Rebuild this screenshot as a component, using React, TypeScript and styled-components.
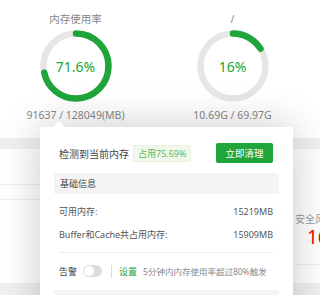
import React from "react";
import styled, { createGlobalStyle } from "styled-components";

const GlobalStyle = createGlobalStyle`
  html, body {
    margin: 0;
    padding: 0;
    background: #f0f0f0;
  }
  body {
    font-family: "Noto Sans", "Noto Sans CJK SC", sans-serif;
  }
`;

const Page = styled.div`
  position: relative;
  width: 320px;
  height: 295px;
  overflow: hidden;
  background: #f0f0f0;
`;

const TopCard = styled.div`
  height: 138px;
  background: #fff;
  display: grid;
  grid-template-columns: 151px 151px 151px;
  column-gap: 6px;
`;

const GaugeItem = styled.div`
  display: flex;
  flex-direction: column;
  align-items: center;
  padding-top: 12px;
`;

const GaugeTitle = styled.div`
  font-size: 10.5px;
  line-height: 14px;
  color: #888;
  height: 14px;
`;

const Ring = styled.div`
  position: relative;
  width: 72px;
  height: 72px;
  margin-top: 4px;
`;

const RingValue = styled.div`
  position: absolute;
  inset: 0;
  display: flex;
  align-items: center;
  justify-content: center;
  font-size: 14px;
  color: #20a53a;
`;

const GaugeFoot = styled.div`
  margin-top: 6px;
  font-size: 10.5px;
  line-height: 14px;
  color: #888;
  white-space: nowrap;
`;

const LowerRow = styled.div`
  margin-top: 11px;
  display: grid;
  grid-template-columns: 284px 1fr;
  column-gap: 4px;
`;

const LeftCard = styled.div`
  height: 134px;
  background: #fff;
`;

const CardHead = styled.div`
  height: 35px;
  border-bottom: 1px solid #eee;
`;

const CardLine = styled.div`
  height: 14px;
  border-bottom: 1px solid #eee;
`;

const RightCard = styled.div`
  height: 134px;
  background: #fff;
  padding: 63px 0 0 7px;
  box-sizing: border-box;
  white-space: nowrap;
`;

const RiskLabel = styled.div`
  font-size: 10px;
  line-height: 14px;
  color: #999;
`;

const RiskNum = styled.div`
  margin: 0 0 0 12px;
  font-size: 19px;
  line-height: 22px;
  color: #f00;
`;

const RiskLine = styled.div`
  margin-top: 16px;
  border-top: 1px solid #eee;
`;

const Popover = styled.div`
  position: absolute;
  left: 40px;
  top: 127px;
  width: 253px;
  height: 200px;
  box-sizing: border-box;
  padding: 16px 14px 0 14px;
  background: #fff;
  border-radius: 2px;
  box-shadow: 0 0 40px rgba(0, 0, 0, 0.22);
  &::before {
    content: "";
    position: absolute;
    left: 13px;
    top: -6px;
    border-left: 6px solid transparent;
    border-right: 6px solid transparent;
    border-bottom: 6px solid #fff;
  }
`;

const Header = styled.div`
  display: flex;
  align-items: center;
  height: 20px;
  padding: 0 6px 0 5px;
`;

const HeadTitle = styled.span`
  font-size: 10px;
  color: #444;
`;

const Tag = styled.span`
  margin-left: 4px;
  height: 17px;
  line-height: 15px;
  box-sizing: border-box;
  padding: 0 4px;
  font-size: 9px;
  color: #5cb85c;
  background: #f0f9eb;
  border: 1px solid #e5f3dc;
  border-radius: 2px;
`;

const CleanButton = styled.button`
  margin-left: auto;
  width: 57px;
  height: 20px;
  padding: 0;
  border: none;
  border-radius: 2px;
  background: #20a53a;
  color: #fff;
  font-family: inherit;
  font-size: 9.5px;
`;

const InfoBox = styled.div`
  margin-top: 10px;
  height: 21px;
  line-height: 21px;
  padding-left: 6px;
  background: #f4f4f4;
  border-radius: 2px;
  font-size: 9px;
  color: #444;
`;

const InfoList = styled.div`
  margin: 6px 6px 0 5px;
  padding-bottom: 6px;
  border-bottom: 1px solid #eee;
`;

const InfoRow = styled.div`
  display: flex;
  justify-content: space-between;
  align-items: center;
  height: 23px;
  font-size: 9px;
  color: #555;
`;

const AlertRow = styled.div`
  display: flex;
  align-items: center;
  height: 16px;
  margin: 10px 5px 0 5px;
  font-size: 9px;
  white-space: nowrap;
`;

const AlertLabel = styled.span`
  color: #444;
`;

const Toggle = styled.span`
  position: relative;
  margin-left: 6px;
  width: 19px;
  height: 12px;
  border-radius: 6px;
  background: #dcdcdc;
  &::after {
    content: "";
    position: absolute;
    left: 1px;
    top: 1px;
    width: 10px;
    height: 10px;
    border-radius: 50%;
    background: #fff;
  }
`;

const VDivider = styled.span`
  width: 1px;
  height: 13px;
  margin: 0 7px 0 9px;
  background: #ddd;
`;

const SetLink = styled.span`
  color: #20a53a;
`;

const AlertHint = styled.span`
  margin-left: 6px;
  color: #888;
  font-size: 8.5px;
`;

const BottomBox = styled.div`
  margin-top: 11px;
  height: 40px;
  background: #f4f4f4;
  border-radius: 2px;
`;

function Gauge({ title, percent, label, foot }: { title: string; percent: number; label: string; foot: string }) {
  const r = 32.5;
  const c = 2 * Math.PI * r;
  return (
    <GaugeItem>
      <GaugeTitle>{title}</GaugeTitle>
      <Ring>
        <svg width="72" height="72" viewBox="0 0 72 72">
          <circle cx="36" cy="36" r={r} fill="none" stroke="#e6e6e6" strokeWidth="6.5" />
          <circle
            cx="36"
            cy="36"
            r={r}
            fill="none"
            stroke="#20a53a"
            strokeWidth="6.5"
            strokeLinecap="round"
            strokeDasharray={`${(c * percent) / 100} ${c}`}
            transform="rotate(-90 36 36)"
          />
        </svg>
        <RingValue>{label}</RingValue>
      </Ring>
      <GaugeFoot>{foot}</GaugeFoot>
    </GaugeItem>
  );
}

export default function App() {
  return (
    <>
      <GlobalStyle />
      <Page>
        <TopCard>
          <Gauge title="内存使用率" percent={71.6} label="71.6%" foot="91637 / 128049(MB)" />
          <Gauge title="/" percent={16} label="16%" foot="10.69G / 69.97G" />
        </TopCard>
        <LowerRow>
          <LeftCard>
            <CardHead />
            <CardLine />
          </LeftCard>
          <RightCard>
            <RiskLabel>安全风险</RiskLabel>
            <RiskNum>16</RiskNum>
            <RiskLine />
          </RightCard>
        </LowerRow>
        <Popover>
          <Header>
            <HeadTitle>检测到当前内存</HeadTitle>
            <Tag>占用75.69%</Tag>
            <CleanButton>立即清理</CleanButton>
          </Header>
          <InfoBox>基础信息</InfoBox>
          <InfoList>
            <InfoRow>
              <span>可用内存:</span>
              <span>15219MB</span>
            </InfoRow>
            <InfoRow>
              <span>Buffer和Cache共占用内存:</span>
              <span>15909MB</span>
            </InfoRow>
          </InfoList>
          <AlertRow>
            <AlertLabel>告警</AlertLabel>
            <Toggle />
            <VDivider />
            <SetLink>设置</SetLink>
            <AlertHint>5分钟内内存使用率超过80%触发</AlertHint>
          </AlertRow>
          <BottomBox />
        </Popover>
      </Page>
    </>
  );
}
